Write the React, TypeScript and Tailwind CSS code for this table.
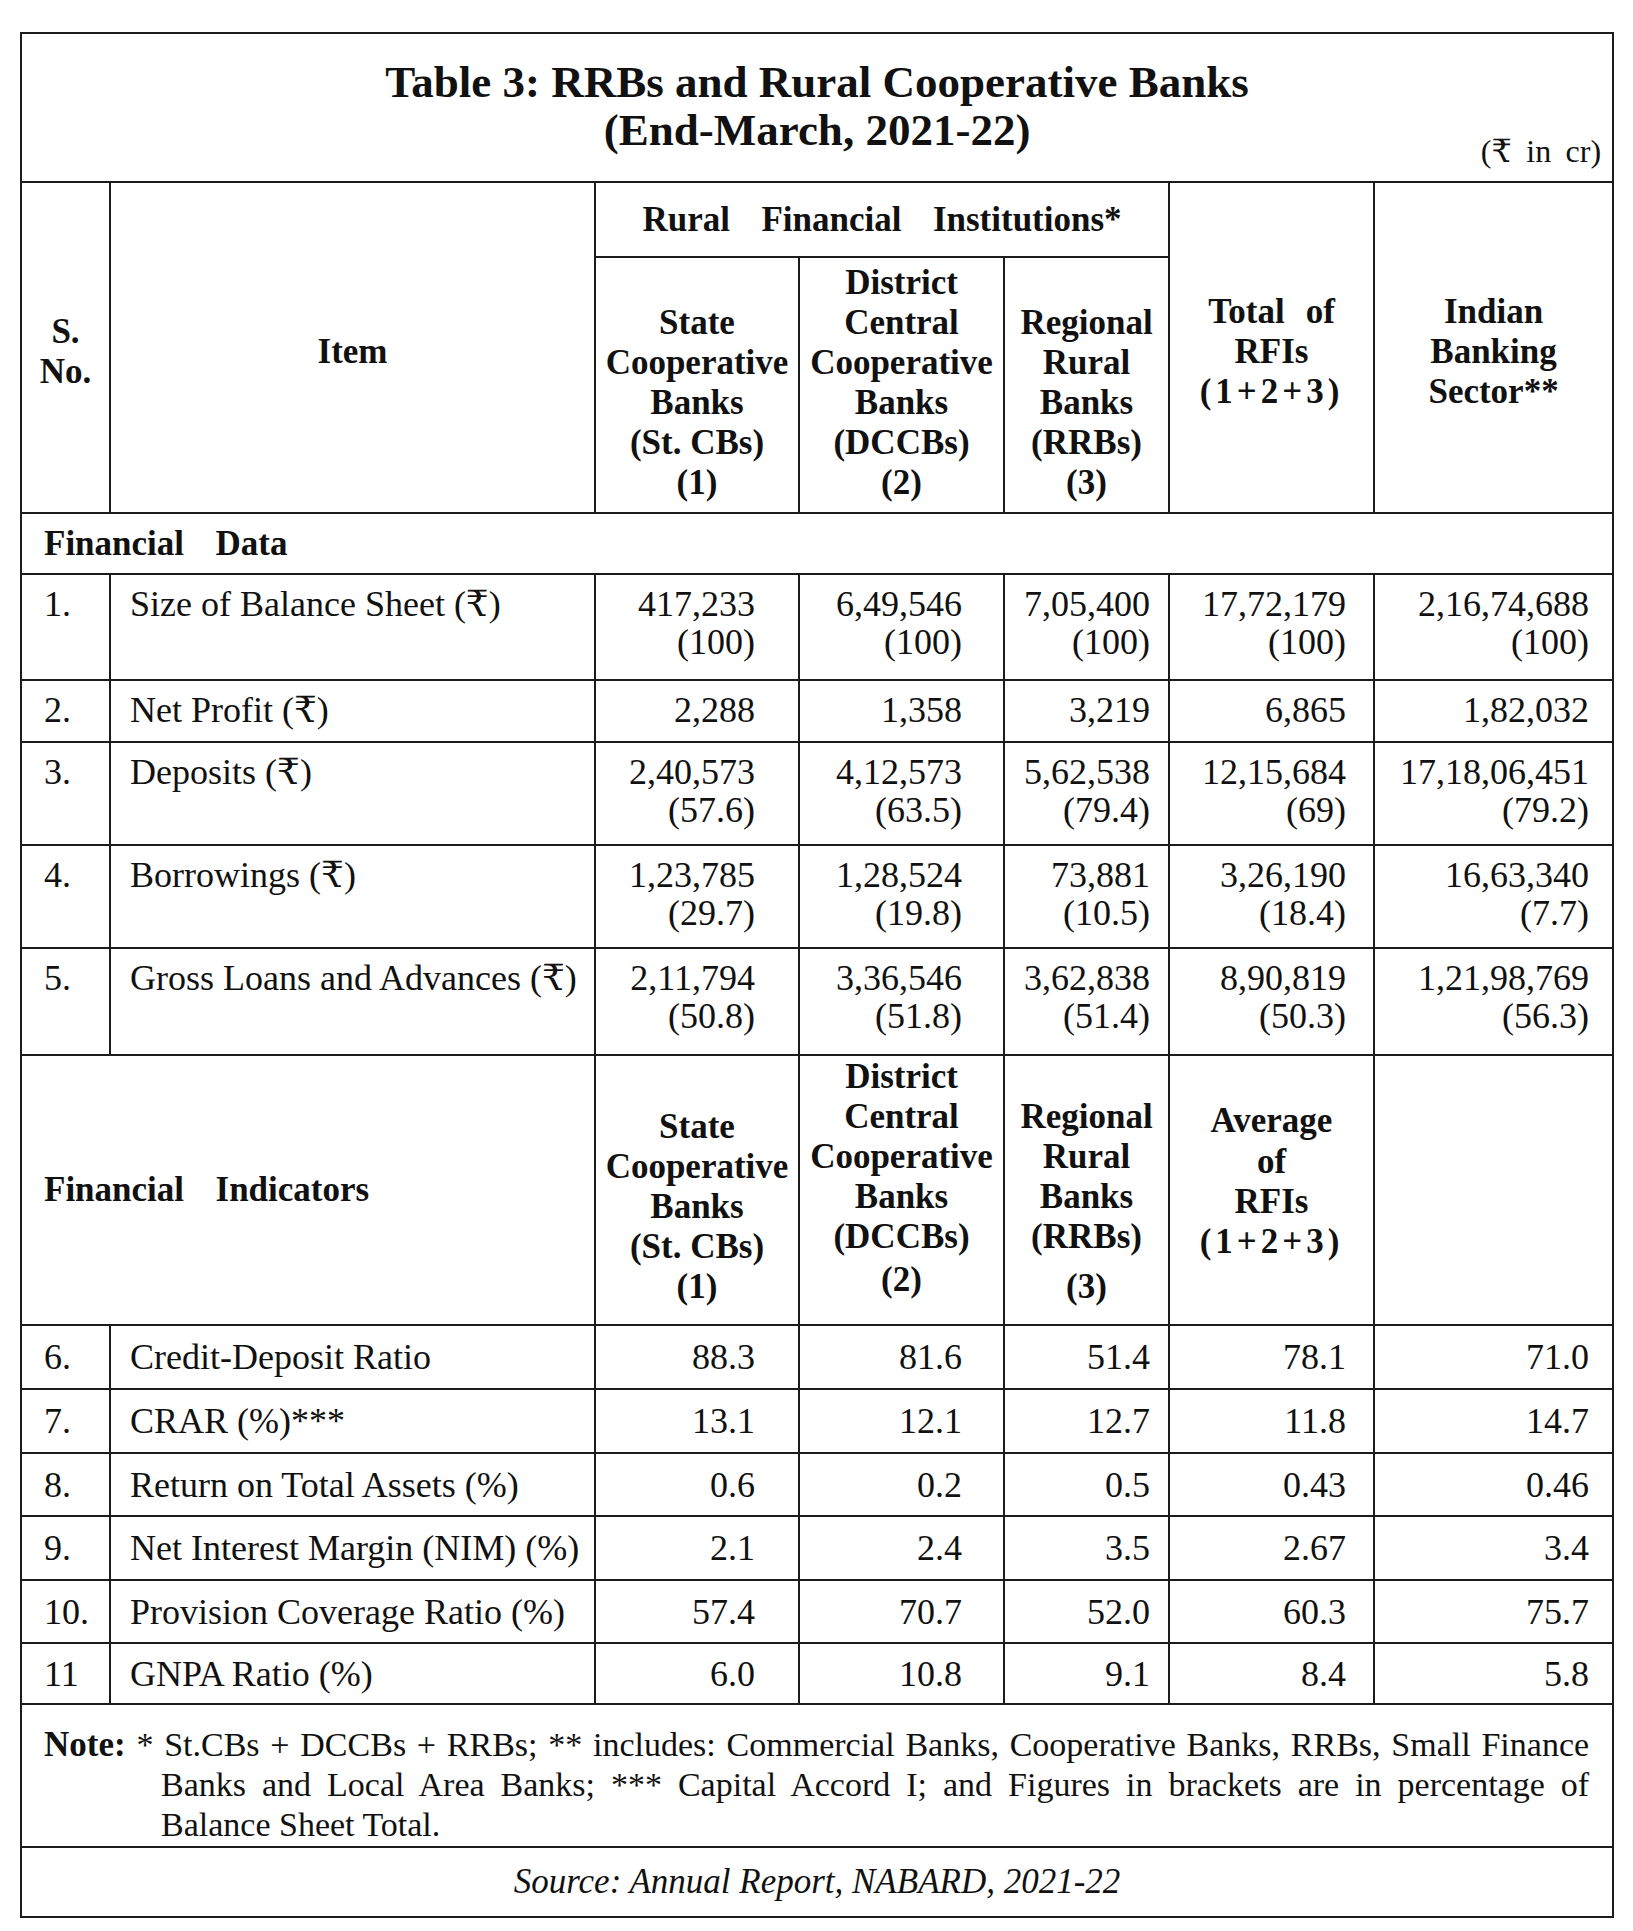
import React from 'react';

// --- DATA ---
type Row = { no: string; item: string; vals: string[][]; h: string };

const dataRows: Row[] = [
  {
    no: '1.',
    item: 'Size of Balance Sheet (₹)',
    vals: [['417,233', '(100)'], ['6,49,546', '(100)'], ['7,05,400', '(100)'], ['17,72,179', '(100)'], ['2,16,74,688', '(100)']],
    h: 'h-[106px]',
  },
  {
    no: '2.',
    item: 'Net Profit (₹)',
    vals: [['2,288'], ['1,358'], ['3,219'], ['6,865'], ['1,82,032']],
    h: 'h-[62px]',
  },
  {
    no: '3.',
    item: 'Deposits (₹)',
    vals: [['2,40,573', '(57.6)'], ['4,12,573', '(63.5)'], ['5,62,538', '(79.4)'], ['12,15,684', '(69)'], ['17,18,06,451', '(79.2)']],
    h: 'h-[103px]',
  },
  {
    no: '4.',
    item: 'Borrowings (₹)',
    vals: [['1,23,785', '(29.7)'], ['1,28,524', '(19.8)'], ['73,881', '(10.5)'], ['3,26,190', '(18.4)'], ['16,63,340', '(7.7)']],
    h: 'h-[103px]',
  },
  {
    no: '5.',
    item: 'Gross Loans and Advances (₹)',
    vals: [['2,11,794', '(50.8)'], ['3,36,546', '(51.8)'], ['3,62,838', '(51.4)'], ['8,90,819', '(50.3)'], ['1,21,98,769', '(56.3)']],
    h: 'h-[107px]',
  },
];

const indicatorRows: Row[] = [
  { no: '6.', item: 'Credit-Deposit Ratio', vals: [['88.3'], ['81.6'], ['51.4'], ['78.1'], ['71.0']], h: 'h-[64px]' },
  { no: '7.', item: 'CRAR (%)***', vals: [['13.1'], ['12.1'], ['12.7'], ['11.8'], ['14.7']], h: 'h-[64px]' },
  { no: '8.', item: 'Return on Total Assets (%)', vals: [['0.6'], ['0.2'], ['0.5'], ['0.43'], ['0.46']], h: 'h-[63px]' },
  { no: '9.', item: 'Net Interest Margin (NIM) (%)', vals: [['2.1'], ['2.4'], ['3.5'], ['2.67'], ['3.4']], h: 'h-[64px]' },
  { no: '10.', item: 'Provision Coverage Ratio (%)', vals: [['57.4'], ['70.7'], ['52.0'], ['60.3'], ['75.7']], h: 'h-[63px]' },
  { no: '11', item: 'GNPA Ratio (%)', vals: [['6.0'], ['10.8'], ['9.1'], ['8.4'], ['5.8']], h: 'h-[61px]' },
];

// right padding differs per numeric column in the print layout
const numPad = ['pr-[43px]', 'pr-[41px]', 'pr-[18px]', 'pr-[27px]', 'pr-[23px]'];

const cell = 'border-2 border-[#1c1c1c]';

const DataRow = ({ row, middle }: { row: Row; middle?: boolean }) => {
  const v = middle ? 'align-middle' : 'align-top pt-[10px]';
  return (
    <tr className={row.h}>
      <td className={`${cell} ${v} pl-[22px]`}>{row.no}</td>
      <td className={`${cell} ${v} pl-[19px] whitespace-nowrap`}>{row.item}</td>
      {row.vals.map((lines, i) => (
        <td key={i} className={`${cell} ${v} text-right ${numPad[i]}`}>
          {lines.map((l, j) => (
            <div key={j}>{l}</div>
          ))}
        </td>
      ))}
    </tr>
  );
};

const Head = ({ lines }: { lines: string[] }) => (
  <>
    {lines.map((l, i) => (
      <div key={i}>{l}</div>
    ))}
  </>
);

export default function App() {
  return (
    <div className="min-h-screen bg-white pt-[32px] pl-[20px] text-[#111]">
      <table
        className="w-[1592px] table-fixed border-collapse border-2 border-[#1c1c1c] text-[36px] leading-[38px]"
        style={{ fontFamily: '"Liberation Serif", "DejaVu Serif", "Noto Sans", serif' }}
      >
        <colgroup>
          <col className="w-[89px]" />
          <col className="w-[485px]" />
          <col className="w-[204px]" />
          <col className="w-[205px]" />
          <col className="w-[165px]" />
          <col className="w-[205px]" />
          <col className="w-[239px]" />
        </colgroup>
        <tbody>
          {/* --- TITLE --- */}
          <tr className="h-[149px]">
            <td colSpan={7} className={`${cell} align-top pt-[24px]`}>
              <div className="text-center font-bold text-[45px] leading-[48px]">
                <div>Table 3: RRBs and Rural Cooperative Banks</div>
                <div>(End-March, 2021-22)</div>
              </div>
              <div className="-mt-[21px] pr-[11px] text-right text-[32px] leading-[36px] [word-spacing:0.2em]">
                (₹ in cr)
              </div>
            </td>
          </tr>

          {/* --- HEADER --- */}
          <tr className="h-[75px]">
            <td rowSpan={2} className={`${cell} text-center align-middle font-bold text-[35px] leading-[40px] pt-[9px]`}>
              <Head lines={['S.', 'No.']} />
            </td>
            <td rowSpan={2} className={`${cell} text-center align-middle font-bold text-[35px] leading-[40px] pt-[9px]`}>
              Item
            </td>
            <td colSpan={3} className={`${cell} text-center align-middle font-bold text-[35px] leading-[40px] [word-spacing:0.65em]`}>
              Rural Financial Institutions*
            </td>
            <td rowSpan={2} className={`${cell} text-center align-middle font-bold text-[35px] leading-[40px] pt-[9px]`}>
              <div className="[word-spacing:0.35em]">Total of</div>
              <div>RFIs</div>
              <div className="tracking-[4px]">(1+2+3)</div>
            </td>
            <td rowSpan={2} className={`${cell} text-center align-middle font-bold text-[35px] leading-[40px] pt-[9px]`}>
              <Head lines={['Indian', 'Banking', 'Sector**']} />
            </td>
          </tr>
          <tr className="h-[256px]">
            <td className={`${cell} text-center align-bottom pb-[9px] font-bold text-[35px] leading-[40px]`}>
              <Head lines={['State', 'Cooperative', 'Banks', '(St. CBs)', '(1)']} />
            </td>
            <td className={`${cell} text-center align-bottom pb-[9px] font-bold text-[35px] leading-[40px]`}>
              <Head lines={['District', 'Central', 'Cooperative', 'Banks', '(DCCBs)', '(2)']} />
            </td>
            <td className={`${cell} text-center align-bottom pb-[9px] font-bold text-[35px] leading-[40px]`}>
              <Head lines={['Regional', 'Rural', 'Banks', '(RRBs)', '(3)']} />
            </td>
          </tr>

          {/* --- FINANCIAL DATA --- */}
          <tr className="h-[61px]">
            <td colSpan={7} className={`${cell} align-middle pl-[22px] font-bold text-[35px] [word-spacing:0.65em]`}>
              Financial Data
            </td>
          </tr>
          {dataRows.map((r) => (
            <DataRow key={r.no} row={r} />
          ))}

          {/* --- FINANCIAL INDICATORS --- */}
          <tr className="h-[270px]">
            <td colSpan={2} className={`${cell} align-middle pl-[22px] font-bold text-[35px] [word-spacing:0.65em]`}>
              Financial Indicators
            </td>
            <td className={`${cell} text-center align-bottom pb-[17px] font-bold text-[35px] leading-[40px] whitespace-nowrap`}>
              <Head lines={['State', 'Cooperative', 'Banks', '(St. CBs)', '(1)']} />
            </td>
            <td className={`${cell} text-center align-bottom pb-[24px] font-bold text-[35px] leading-[40px] whitespace-nowrap`}>
              <Head lines={['District', 'Central', 'Cooperative', 'Banks', '(DCCBs)']} />
              <div className="mt-[3px]">(2)</div>
            </td>
            <td className={`${cell} text-center align-bottom pb-[17px] font-bold text-[35px] leading-[40px]`}>
              <Head lines={['Regional', 'Rural', 'Banks', '(RRBs)']} />
              <div className="mt-[10px]">(3)</div>
            </td>
            <td className={`${cell} text-center align-middle pb-[17px] font-bold text-[35px] leading-[40px]`}>
              <div className="mb-[1px]">Average</div>
              <div>of</div>
              <div>RFIs</div>
              <div className="tracking-[4px]">(1+2+3)</div>
            </td>
            <td className={cell}></td>
          </tr>
          {indicatorRows.map((r) => (
            <DataRow key={r.no} row={r} middle />
          ))}

          {/* --- NOTE --- */}
          <tr className="h-[143px]">
            <td colSpan={7} className={`${cell} align-top pt-[20px] pl-[22px] pr-[23px] text-[34px] leading-[40px]`}>
              <div className="pl-[117px]">
                <div className="-ml-[117px] whitespace-nowrap text-justify [text-align-last:justify]">
                  <span className="font-bold text-[35px]">Note:</span> * St.CBs + DCCBs + RRBs; ** includes: Commercial Banks, Cooperative Banks, RRBs, Small Finance
                </div>
                <div className="whitespace-nowrap text-justify [text-align-last:justify]">
                  Banks and Local Area Banks; *** Capital Accord I; and Figures in brackets are in percentage of
                </div>
                <div>Balance Sheet Total.</div>
              </div>
            </td>
          </tr>

          {/* --- SOURCE --- */}
          <tr className="h-[70px]">
            <td colSpan={7} className={`${cell} text-center align-middle italic text-[35px]`}>
              Source: Annual Report, NABARD, 2021-22
            </td>
          </tr>
        </tbody>
      </table>
    </div>
  );
}
